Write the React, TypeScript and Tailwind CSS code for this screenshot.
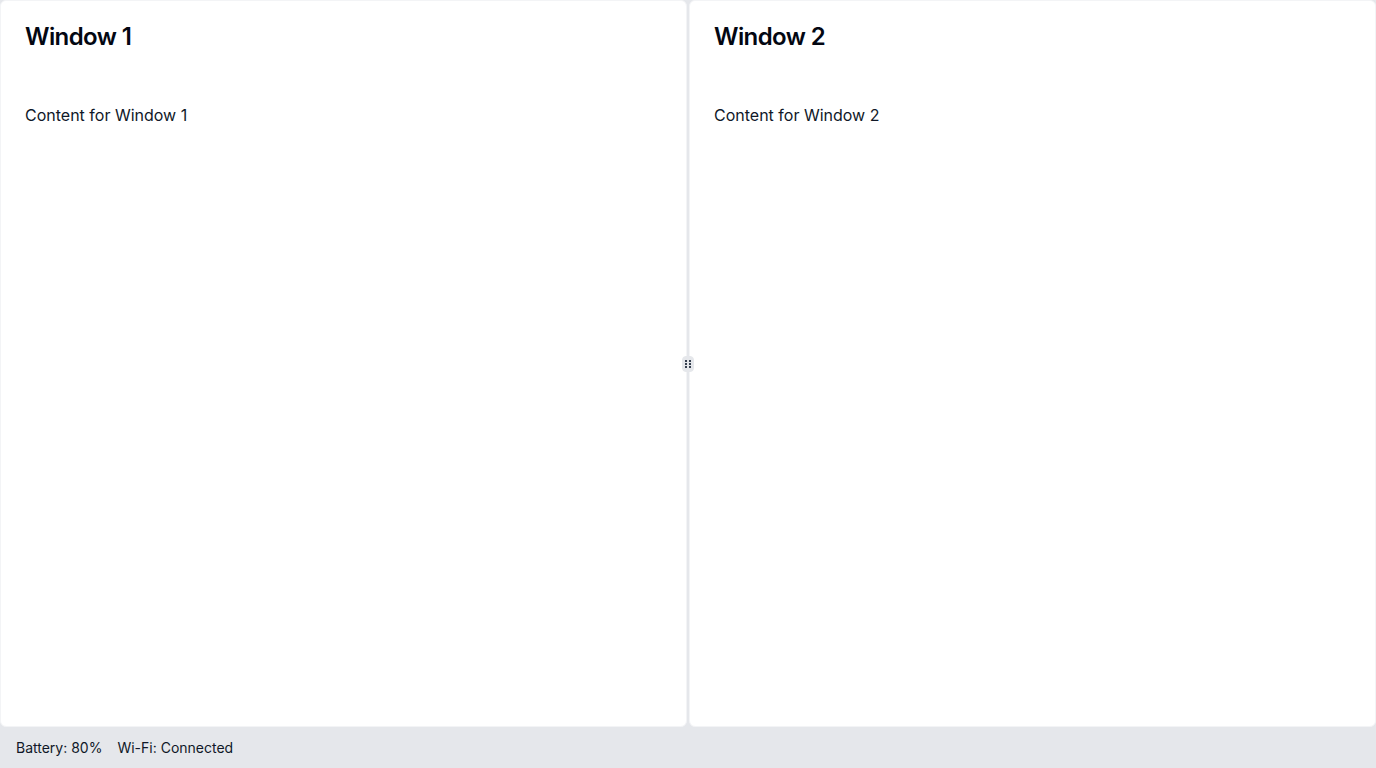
import React from 'react'

const font = { fontFamily: 'Inter, "Noto Sans", sans-serif' }

function Panel({ n }: { n: number }) {
  return (
    <div className="flex-1 min-w-0 rounded-md border border-gray-100 bg-white px-6 pt-5">
      <h2 className="text-2xl font-semibold tracking-tight text-gray-950">Window {n}</h2>
      <p className="mt-[50px] text-base text-gray-900">Content for Window {n}</p>
    </div>
  )
}

function Handle() {
  return (
    <div className="relative flex w-[2px] items-center justify-center bg-gray-200">
      <div className="absolute z-10 flex h-4 w-3 items-center justify-center rounded-sm border border-gray-200 bg-gray-200">
        <svg width="6" height="8" viewBox="0 0 6 8" fill="#374151">
          <rect x="0" y="0" width="2" height="2" />
          <rect x="4" y="0" width="2" height="2" />
          <rect x="0" y="3" width="2" height="2" />
          <rect x="4" y="3" width="2" height="2" />
          <rect x="0" y="6" width="2" height="2" />
          <rect x="4" y="6" width="2" height="2" />
        </svg>
      </div>
    </div>
  )
}

export default function App() {
  return (
    <div className="flex h-screen flex-col bg-gray-200" style={font}>
      <div className="mb-px flex min-h-0 flex-1">
        <Panel n={1} />
        <Handle />
        <Panel n={2} />
      </div>
      <div className="flex h-10 items-center gap-[15px] px-4 text-sm text-gray-900">
        <span>Battery: 80%</span>
        <span>Wi-Fi: Connected</span>
      </div>
    </div>
  )
}
